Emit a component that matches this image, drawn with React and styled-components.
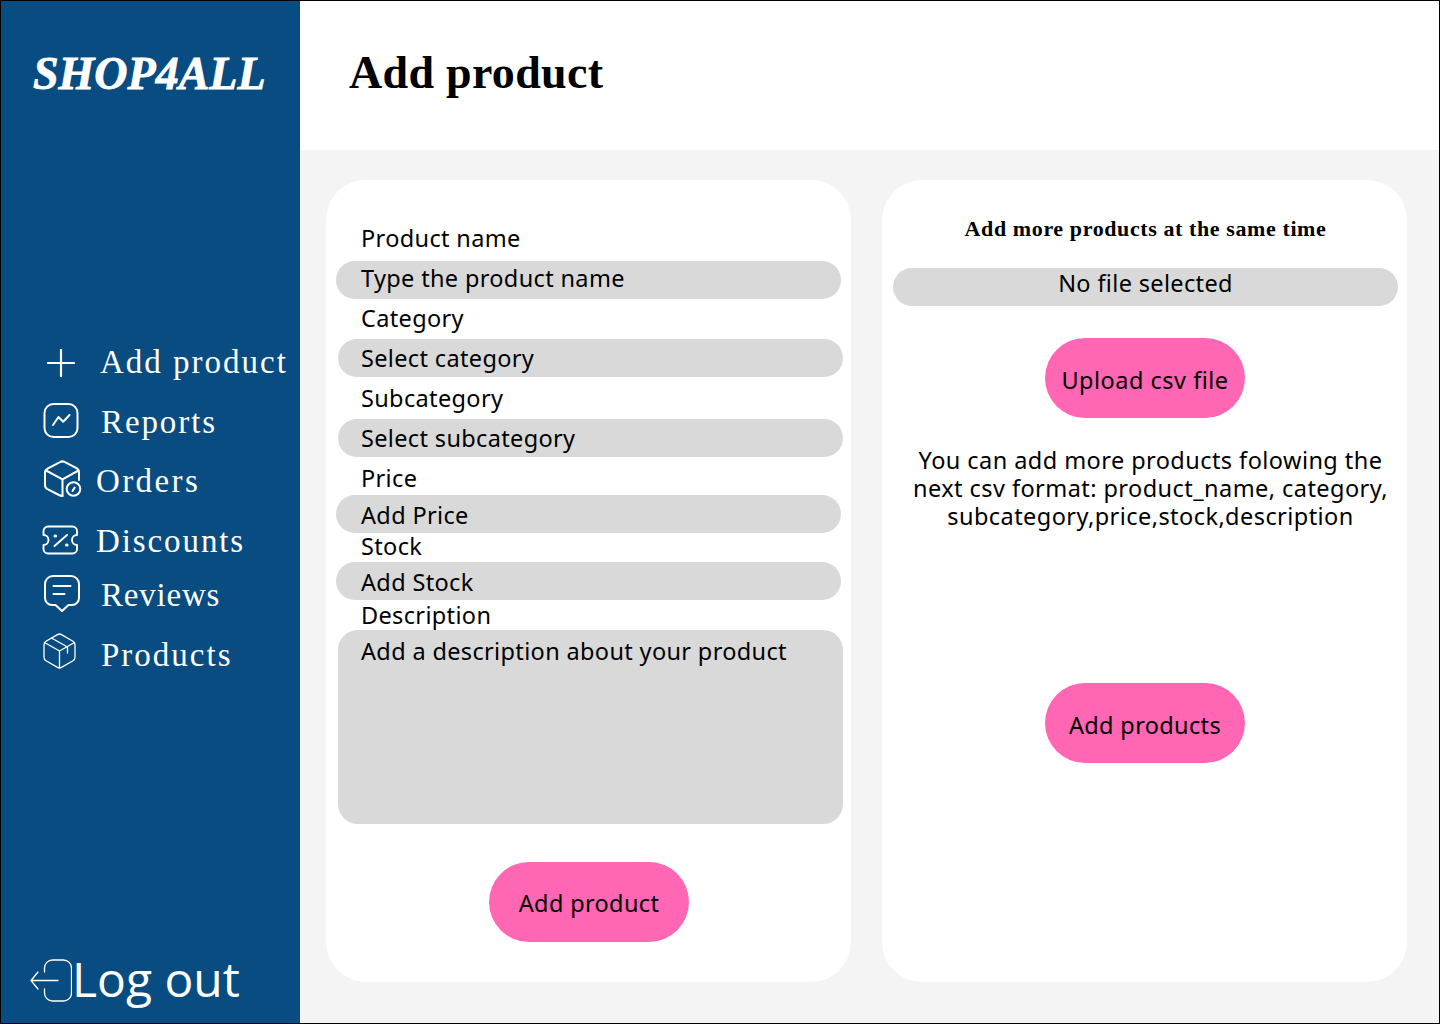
import React from 'react'
import styled, { createGlobalStyle } from 'styled-components'

const GlobalStyle = createGlobalStyle`
  html, body {
    margin: 0;
    padding: 0;
    background: #fff;
  }
  * {
    box-sizing: border-box;
  }
`

const Page = styled.div`
  width: 1440px;
  height: 1024px;
  border: 1px solid #000;
  display: flex;
  font-family: "Noto Sans", "Lato", sans-serif;
  color: #000;
  overflow: hidden;
`

const Sidebar = styled.aside`
  width: 299px;
  flex-shrink: 0;
  background: #084c82;
  color: #fff;
  display: flex;
  flex-direction: column;
`

const Logo = styled.div`
  margin: 46px 0 0 32px;
  height: 54px;
  line-height: 54px;
  font-family: "Liberation Serif", serif;
  font-style: italic;
  font-weight: 700;
  font-size: 46px;
  -webkit-text-stroke: 0.8px #fff;
  white-space: nowrap;
`

const Nav = styled.nav`
  margin-top: 241px;
  display: flex;
  flex-direction: column;
`

const NavItem = styled.a`
  height: 40px;
  margin-top: ${p => p.$top}px;
  padding-left: ${p => p.$left}px;
  display: flex;
  align-items: center;
  gap: ${p => p.$gap}px;
  font-family: "Liberation Serif", serif;
  font-size: 33px;
  letter-spacing: ${p => p.$spacing}px;
  white-space: nowrap;
  svg {
    flex-shrink: 0;
    margin-top: ${p => p.$iconTop}px;
    fill: none;
    stroke: #fff;
    stroke-linecap: round;
    stroke-linejoin: round;
  }
`

const LogOut = styled.div`
  margin-top: auto;
  margin-bottom: 15px;
  padding-left: 29px;
  height: 60px;
  display: flex;
  align-items: center;
  font-family: "Open Sans", sans-serif;
  font-size: 48px;
  white-space: nowrap;
  svg {
    margin-top: 5px;
    fill: none;
    stroke: #fff;
    stroke-width: 1.3;
    stroke-linecap: round;
    stroke-linejoin: round;
  }
`

const Main = styled.main`
  flex: 1;
  display: flex;
  flex-direction: column;
  background: #f4f4f4;
`

const Header = styled.header`
  height: 149px;
  background: #fff;
  padding: 44px 0 0 49px;
`

const Title = styled.h1`
  margin: 0;
  font-family: "Liberation Serif", serif;
  font-weight: 700;
  font-size: 46px;
  letter-spacing: 0.3px;
  line-height: 56px;
`

const Cards = styled.div`
  display: flex;
  gap: 31px;
  padding: 30px 0 0 26px;
`

const Card = styled.section`
  width: 525px;
  height: 802px;
  background: #fff;
  border-radius: 40px;
  display: flex;
  flex-direction: column;
  font-size: 23.5px;
  letter-spacing: 0.35px;
`

const FormCard = styled(Card)`
  padding: 45px 0 0 10px;
`

const UploadCard = styled(Card)`
  padding: 35px 0 0 11px;
  align-items: flex-start;
`

const Label = styled.div`
  height: 28px;
  line-height: 26px;
  margin-top: ${p => p.$top || 0}px;
  padding-left: 25px;
`

const Pill = styled.div`
  width: 505px;
  height: 38px;
  line-height: ${p => p.$line || 38}px;
  margin-top: ${p => p.$top || 0}px;
  margin-left: ${p => p.$shift || 0}px;
  padding-left: ${p => 25 - (p.$shift || 0)}px;
  background: #d9d9d9;
  border-radius: 19px;
`

const TextArea = styled.div`
  width: 505px;
  height: 194px;
  margin-left: 2px;
  padding: 7px 0 0 23px;
  line-height: 28px;
  background: #d9d9d9;
  border-radius: 20px;
`

const PinkButton = styled.button`
  width: 200px;
  height: 80px;
  border: none;
  border-radius: 40px;
  background: #ff66b3;
  color: #000;
  font-family: inherit;
  font-size: 23.5px;
  letter-spacing: ${p => p.$spacing || 0.35}px;
  padding: ${p => p.$pad}px 0 0;
  margin-top: ${p => p.$top}px;
  margin-left: ${p => p.$left}px;
  flex-shrink: 0;
`

const UploadTitle = styled.h2`
  margin: 0;
  width: 505px;
  height: 28px;
  line-height: 28px;
  text-align: center;
  font-family: "Liberation Serif", serif;
  font-weight: 700;
  font-size: 22px;
  letter-spacing: 0.6px;
`

const FileName = styled(Pill)`
  padding-left: 0;
  text-align: center;
  margin-top: 25px;
`

const Hint = styled.p`
  margin: 28px 0 0 0;
  width: 505px;
  padding-left: 10px;
  text-align: center;
  line-height: 28px;
  letter-spacing: 0.44px;
`

const PlusIcon = () => (
  <svg width="28" height="28" viewBox="0 0 28 28" strokeWidth="2.2">
    <path d="M14 1v26M1 14h26" />
  </svg>
)

const ReportsIcon = () => (
  <svg width="36" height="36" viewBox="0 0 36 36" strokeWidth="2">
    <rect x="1.500" y="2" width="33" height="33" rx="9" />
    <path d="M10 23l5.500-8 4.700 4.700L26.500 13" />
  </svg>
)

const OrdersIcon = () => (
  <svg width="39" height="38" viewBox="0 0 39 38" strokeWidth="2">
    <path d="M36 20v-7.500c0-2-1-3.400-2.500-4.300L22 2.100a5 5 0 0 0-5 0L4.500 8.600C3 9.400 2 11 2 12.800v12.400c0 1.800 1 3.200 2.500 4L17 35.500c.8.400 1.600.6 2.500.6" />
    <path d="M3 10.500l16.500 8.800L35.500 10.500M19.500 19.300V36" />
    <circle cx="30.500" cy="29" r="6.800" />
    <path d="M29.500 31l2.200-3.500" />
  </svg>
)

const DiscountsIcon = () => (
  <svg width="37" height="30" viewBox="0 0 37 30" strokeWidth="1.900">
    <path d="M6 1.500h24.500a4.500 4.500 0 0 1 4.500 4.500v4a5 5 0 0 0 0 10v4a4.500 4.500 0 0 1-4.500 4.500H6A4.500 4.500 0 0 1 1.500 24v-4a5 5 0 0 0 0-10V6A4.500 4.500 0 0 1 6 1.500z" />
    <path d="M12.500 21L25 10" />
    <path d="M13 11h.6M24.500 20h.6" strokeWidth="3" />
  </svg>
)

const ReviewsIcon = () => (
  <svg width="36" height="37" viewBox="0 0 36 37" strokeWidth="2">
    <path d="M9 1h18a8 8 0 0 1 8 8v14a7 7 0 0 1-7 7h-3.500L18 36l-6.500-6H8a7 7 0 0 1-7-7V9a8 8 0 0 1 8-8z" />
    <path d="M9.500 11h17M9.500 19h11" />
  </svg>
)

const ProductsIcon = () => (
  <svg width="35" height="36" viewBox="0 0 35 36" strokeWidth="1.300">
    <path d="M15.500 1.600a4 4 0 0 1 4 0l11.500 6.600a4 4 0 0 1 2 3.500v12.600a4 4 0 0 1-2 3.500l-11.500 6.600a4 4 0 0 1-4 0L4 27.800a4 4 0 0 1-2-3.500V11.700a4 4 0 0 1 2-3.500z" />
    <path d="M2.500 9.500L17.500 18l15-8.500M17.500 18v17M9.500 5l16 9v6" />
  </svg>
)

const LogOutIcon = () => (
  <svg width="42" height="43" viewBox="0 0 42 43">
    <path d="M14.500 13V9a8 8 0 0 1 8-8h11a8 8 0 0 1 8 8v25a8 8 0 0 1-8 8h-11a8 8 0 0 1-8-8v-4" />
    <path d="M28 21.500H1M8 13L1 21.500 8 30" />
  </svg>
)

const navItems = [
  { label: 'Add product', icon: <PlusIcon />, top: 0, left: 46, gap: 25, spacing: 2, iconTop: 2 },
  { label: 'Reports', icon: <ReportsIcon />, top: 20, left: 42, gap: 22, spacing: 1.9, iconTop: -4 },
  { label: 'Orders', icon: <OrdersIcon />, top: 19, left: 42, gap: 14, spacing: 2.4, iconTop: -5 },
  { label: 'Discounts', icon: <DiscountsIcon />, top: 20, left: 41, gap: 17, spacing: 1.9, iconTop: -2 },
  { label: 'Reviews', icon: <ReviewsIcon />, top: 14, left: 43, gap: 21, spacing: 0.8, iconTop: -3 },
  { label: 'Products', icon: <ProductsIcon />, top: 20, left: 41, gap: 24, spacing: 2, iconTop: -9 },
]

export default function App() {
  return (
    <>
      <GlobalStyle />
      <Page>
        <Sidebar>
          <Logo>SHOP4ALL</Logo>
          <Nav>
            {navItems.map(item => (
              <NavItem
                key={item.label}
                $top={item.top}
                $left={item.left}
                $gap={item.gap}
                $spacing={item.spacing}
                $iconTop={item.iconTop}
              >
                {item.icon}
                {item.label}
              </NavItem>
            ))}
          </Nav>
          <LogOut>
            <LogOutIcon />
            Log out
          </LogOut>
        </Sidebar>
        <Main>
          <Header>
            <Title>Add product</Title>
          </Header>
          <Cards>
            <FormCard>
              <Label>Product name</Label>
              <Pill $top={8} $line={35}>Type the product name</Pill>
              <Label $top={6}>Category</Label>
              <Pill $top={6} $shift={2} $line={38}>Select category</Pill>
              <Label $top={8}>Subcategory</Label>
              <Pill $top={6} $shift={2} $line={38}>Select subcategory</Pill>
              <Label $top={8}>Price</Label>
              <Pill $top={2} $line={40}>Add Price</Pill>
              <Label>Stock</Label>
              <Pill $top={1} $line={40}>Add Stock</Pill>
              <Label $top={2}>Description</Label>
              <TextArea>Add a description about your product</TextArea>
              <PinkButton $top={38} $left={153} $pad={2}>Add product</PinkButton>
            </FormCard>
            <UploadCard>
              <UploadTitle>Add more products at the same time</UploadTitle>
              <FileName $line={30}>No file selected</FileName>
              <PinkButton $top={32} $left={152} $pad={4} $spacing={0.5}>Upload csv file</PinkButton>
              <Hint>
                You can add more products folowing the<br />
                next csv format: product_name, category,<br />
                subcategory,price,stock,description
              </Hint>
              <PinkButton $top={153} $left={152} $pad={3}>Add products</PinkButton>
            </UploadCard>
          </Cards>
        </Main>
      </Page>
    </>
  )
}
